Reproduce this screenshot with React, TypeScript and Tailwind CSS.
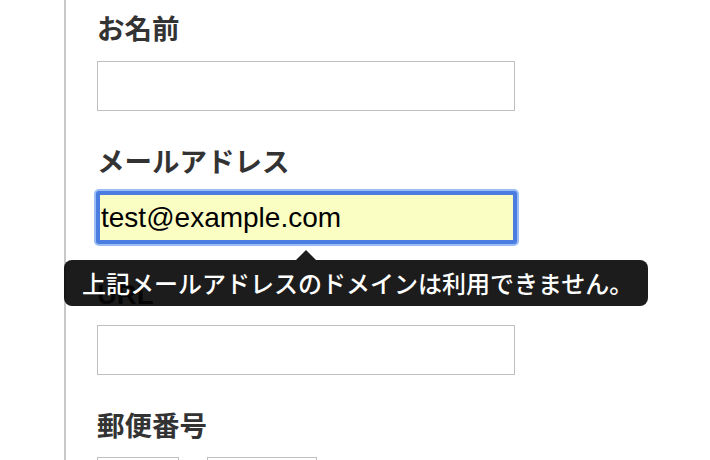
import React from "react";

const labelCls =
  "block h-[40px] leading-[40px] text-[27.5px] font-bold text-[#333333] [font-family:'Liberation_Sans','Noto_Sans_CJK_JP',sans-serif]";

const inputCls =
  "block h-[50px] w-[418px] border border-[#bfbfbf] bg-white outline-none";

export default function App() {
  return (
    <div className="relative w-[710px] h-[460px] overflow-hidden bg-white">
      <div className="flex h-full">
        <div className="w-[64px] shrink-0" />
        <div className="w-[2px] shrink-0 bg-[#c8c8c8]" />
        <div className="flex flex-col pl-[31px] pt-[10px]">
          {/* お名前 */}
          <label className={labelCls}>お名前</label>
          <div className="mt-[11px] mb-[32px]">
            <input className={inputCls} />
          </div>

          {/* メールアドレス */}
          <label className={labelCls}>メールアドレス</label>
          <div className="mt-[10px] mb-[32px] h-[50px]">
            <input
              className="-mt-[2px] -ml-[1px] block h-[53px] w-[421px] rounded-[3px] border-[4px] border-[#4a7ddf] bg-[#fafec2] pl-[1px] text-[28px] text-black outline-none shadow-[0_0_0_2px_rgba(130,172,243,0.8)] [font-family:'Liberation_Sans',sans-serif]"
              defaultValue="test@example.com"
            />
          </div>

          {/* URL */}
          <label className={labelCls}>URL</label>
          <div className="mt-[10px] mb-[32px]">
            <input className={inputCls} />
          </div>

          {/* 郵便番号 */}
          <label className={labelCls}>郵便番号</label>
          <div className="mt-[10px] flex gap-[28px]">
            <input className="block h-[50px] w-[82px] border border-[#bfbfbf] bg-white outline-none" />
            <input className="block h-[50px] w-[110px] border border-[#bfbfbf] bg-white outline-none" />
          </div>
        </div>
      </div>

      {/* Tooltip */}
      <div className="absolute left-[64px] top-[260px] h-[46px] w-[584px] rounded-[8px] bg-[rgba(0,0,0,0.89)]">
        <div className="absolute left-[232px] -top-[10px] h-0 w-0 border-l-[10px] border-r-[10px] border-b-[10px] border-l-transparent border-r-transparent border-b-[rgba(0,0,0,0.89)]" />
        <div className="flex h-full items-center whitespace-nowrap pl-[18px] text-[24px] font-medium text-white [font-family:'Noto_Sans_CJK_JP',sans-serif]">
          上記メールアドレスのドメインは利用できません。
        </div>
      </div>
    </div>
  );
}
